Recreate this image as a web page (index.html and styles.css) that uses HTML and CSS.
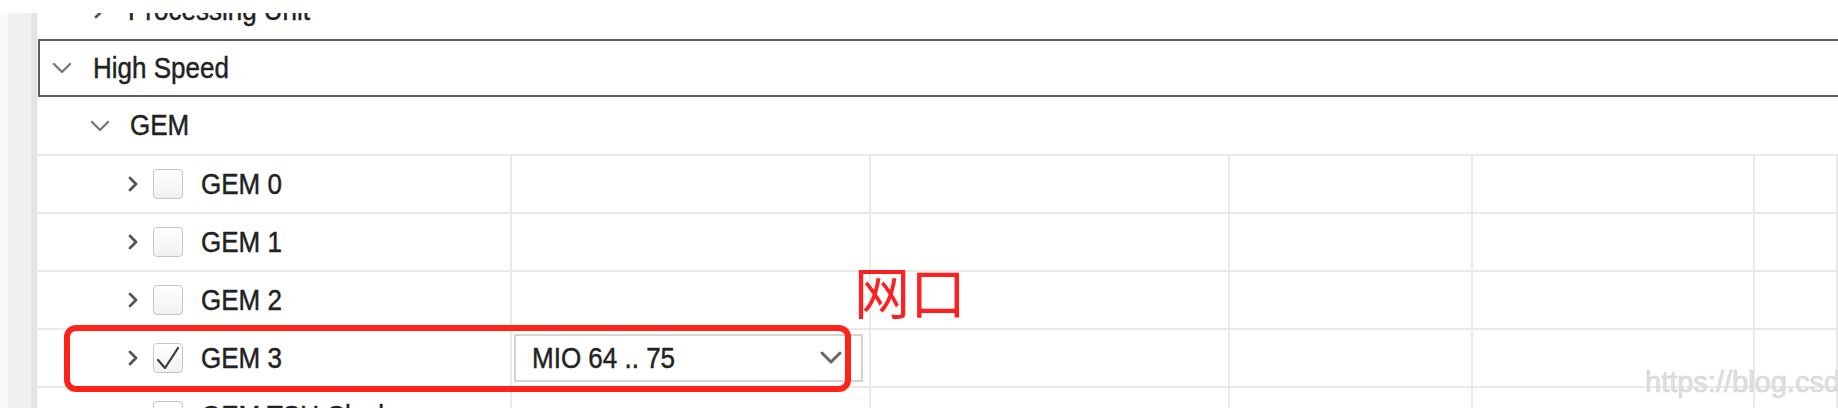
FILE: index.html
```html
<!DOCTYPE html>
<html>
<head>
<meta charset="utf-8">
<link rel="stylesheet" href="styles.css">
</head>
<body>
<div class="screen">
  <div class="gutter"></div>
  <div class="tree">
    <div class="clip">
      <div class="row partial">
        <span class="twisty right"><svg width="10" height="16" viewBox="0 0 10 16"><path d="M2 2 L8 8 L2 14" /></svg></span>
        <span class="label">Processing Unit</span>
      </div>
    </div>
    <div class="row group">
      <span class="twisty down"><svg width="20" height="12" viewBox="0 0 20 12"><path d="M2 2 L10 10 L18 2" /></svg></span>
      <span class="label">High Speed</span>
    </div>
    <div class="row sub">
      <span class="twisty down"><svg width="20" height="12" viewBox="0 0 20 12"><path d="M2 2 L10 10 L18 2" /></svg></span>
      <span class="label">GEM</span>
    </div>
    <div class="grid">
      <div class="grow">
        <div class="cell first">
          <span class="twisty right"><svg width="10" height="16" viewBox="0 0 10 16"><path d="M2 2 L8 8 L2 14" /></svg></span>
          <span class="check"></span>
          <span class="label">GEM 0</span>
        </div>
        <div class="cell"></div><div class="cell"></div><div class="cell"></div><div class="cell"></div><div class="cell"></div>
      </div>
      <div class="grow">
        <div class="cell first">
          <span class="twisty right"><svg width="10" height="16" viewBox="0 0 10 16"><path d="M2 2 L8 8 L2 14" /></svg></span>
          <span class="check"></span>
          <span class="label">GEM 1</span>
        </div>
        <div class="cell"></div><div class="cell"></div><div class="cell"></div><div class="cell"></div><div class="cell"></div>
      </div>
      <div class="grow">
        <div class="cell first">
          <span class="twisty right"><svg width="10" height="16" viewBox="0 0 10 16"><path d="M2 2 L8 8 L2 14" /></svg></span>
          <span class="check"></span>
          <span class="label">GEM 2</span>
        </div>
        <div class="cell"></div><div class="cell"></div><div class="cell"></div><div class="cell"></div><div class="cell"></div>
      </div>
      <div class="grow">
        <div class="cell first">
          <span class="twisty right"><svg width="10" height="16" viewBox="0 0 10 16"><path d="M2 2 L8 8 L2 14" /></svg></span>
          <span class="check checked"><svg width="30" height="30" viewBox="0 0 30 30"><path d="M5 17 L12 25 L25 5" /></svg></span>
          <span class="label">GEM 3</span>
        </div>
        <div class="cell">
          <div class="select">
            <span class="select-text">MIO 64 .. 75</span>
            <svg class="select-arrow" width="22" height="14" viewBox="0 0 22 14"><path d="M2 2 L11 11 L20 2" /></svg>
          </div>
        </div>
        <div class="cell"></div><div class="cell"></div><div class="cell"></div><div class="cell"></div>
      </div>
      <div class="grow">
        <div class="cell first">
          <span class="twisty blank"></span>
          <span class="check"></span>
          <span class="label">GEM TSU Clock</span>
        </div>
        <div class="cell"></div><div class="cell"></div><div class="cell"></div><div class="cell"></div><div class="cell"></div>
      </div>
    </div>
  </div>
  <div class="annot">网口</div>
  <div class="highlight"></div>
  <div class="watermark">https://blog.csdn.net</div>
</div>
</body>
</html>
```

FILE: styles.css
```css
* { box-sizing: border-box; }
html, body { margin: 0; padding: 0; }
body {
  width: 1838px;
  height: 408px;
  overflow: hidden;
  background: #ffffff;
  font-family: "Liberation Sans", Arial, sans-serif;
  color: #222222;
}
.screen {
  position: relative;
  display: flex;
  padding-top: 13px;
  height: 408px;
}
.gutter {
  flex: none;
  width: 38px;
  background: linear-gradient(to right, #fafafa 0 8px, #f0f0f0 8px 31px, #e4e4e4 31px 37px, #f4f4f4 37px 38px);
}
.tree {
  flex: 1;
  min-width: 0;
}
.clip {
  height: 26px;
  overflow: hidden;
}
.row {
  display: flex;
  align-items: center;
  height: 57px;
  font-size: 26px;
  white-space: nowrap;
}
.label, .select-text {
  display: inline-block;
  transform: scaleY(1.14);
  -webkit-text-stroke: 0.4px #222222;
}
.partial {
  margin-top: -31px;
  padding-left: 56px;
}
.partial .label { margin-left: 24px; }
.group {
  height: 58px;
  border: 2px solid #5e5e5e;
  border-right: none;
  padding-left: 12px;
}
.group .label { margin-left: 21px; }
.sub {
  padding-left: 52px;
}
.sub .label { margin-left: 20px; }
.twisty {
  display: flex;
  align-items: center;
  flex: none;
}
.twisty svg path {
  fill: none;
  stroke-linecap: round;
  stroke-linejoin: round;
}
.twisty.down svg path { stroke: #7a7a7a; stroke-width: 2.4; }
.twisty.right svg path { stroke: #555555; stroke-width: 2.8; }
.twisty.blank { width: 10px; height: 16px; }

.grid { display: flex; flex-direction: column; }
.grow {
  display: grid;
  grid-template-columns: 474px 359px 359px 243px 282px 1fr;
  height: 58px;
  border-top: 2px solid #e9e9e9;
}
.cell {
  border-right: 2px solid #e9e9e9;
  display: flex;
  align-items: center;
  min-width: 0;
}
.cell.first {
  padding-left: 90px;
  font-size: 26px;
  white-space: nowrap;
}
.check {
  flex: none;
  width: 30px;
  height: 30px;
  margin-left: 15px;
  border: 1.5px solid #c6c6c6;
  border-radius: 4px;
  background: linear-gradient(#ffffff, #f1f1f1);
  position: relative;
}
.check svg {
  position: absolute;
  left: -1.5px;
  top: -1.5px;
}
.check svg path {
  fill: none;
  stroke: #3a3a3a;
  stroke-width: 2.2;
  stroke-linecap: round;
  stroke-linejoin: round;
}
.cell.first .label { margin-left: 18px; }

.select {
  margin-left: 2px;
  width: 349px;
  height: 48px;
  border: 2px solid #d3d3d3;
  background: #ffffff;
  display: flex;
  align-items: center;
  justify-content: space-between;
  padding-left: 16px;
  padding-right: 19px;
  font-size: 26px;
  color: #222222;
}
.select-arrow path {
  fill: none;
  stroke: #666666;
  stroke-width: 3;
  stroke-linecap: round;
  stroke-linejoin: round;
}

.annot {
  position: absolute;
  left: 854px;
  top: 262px;
  font-family: "Noto Sans CJK SC", sans-serif;
  font-weight: 400;
  font-size: 56px;
  line-height: 1;
  color: #ff1f1f;
  white-space: nowrap;
}
.highlight {
  position: absolute;
  left: 64px;
  top: 325px;
  width: 787px;
  height: 67px;
  border: 6px solid #ff2219;
  border-radius: 12px;
}
.watermark {
  position: absolute;
  left: 1645px;
  top: 366px;
  font-size: 29px;
  color: #e0e0e0;
  white-space: nowrap;
  -webkit-text-stroke: 0.6px #d2d2d2;
}
```
